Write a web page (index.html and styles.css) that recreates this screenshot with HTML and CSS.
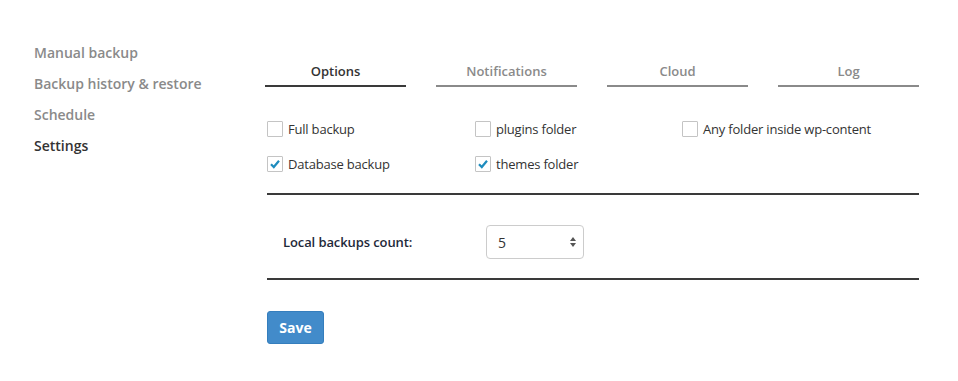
FILE: index.html
```html
<!DOCTYPE html>
<html lang="en">
<head>
    <meta charset="UTF-8">
    <title>Backup Settings</title>
    <link rel="stylesheet" href="styles.css">
</head>
<body>
    <div class="page">
        <ul class="side-menu">
            <li>Manual backup</li>
            <li>Backup history &amp; restore</li>
            <li>Schedule</li>
            <li class="active">Settings</li>
        </ul>

        <div class="main">
            <div class="tabs">
                <div class="tab active">Options</div>
                <div class="tab">Notifications</div>
                <div class="tab">Cloud</div>
                <div class="tab">Log</div>
            </div>

            <div class="panel">
                <div class="check-grid">
                    <label class="check"><span class="box"></span>Full backup</label>
                    <label class="check"><span class="box"></span>plugins folder</label>
                    <label class="check"><span class="box"></span>Any folder inside wp-content</label>
                    <label class="check"><span class="box"><svg viewBox="0 0 14 14" width="14" height="14"><path d="M3 7.2 L5.8 10 L11 3.8" fill="none" stroke="#1e8cbe" stroke-width="2.2"/></svg></span>Database backup</label>
                    <label class="check"><span class="box"><svg viewBox="0 0 14 14" width="14" height="14"><path d="M3 7.2 L5.8 10 L11 3.8" fill="none" stroke="#1e8cbe" stroke-width="2.2"/></svg></span>themes folder</label>
                </div>

                <div class="count-row">
                    <span class="count-label">Local backups count:</span>
                    <div class="select">
                        <span>5</span>
                        <svg viewBox="0 0 8 12" width="8" height="12"><path d="M4 1 L7 5 L1 5 Z M4 11 L7 7 L1 7 Z" fill="#555"/></svg>
                    </div>
                </div>

                <button class="save-button">Save</button>
            </div>
        </div>
    </div>
</body>
</html>
```

FILE: styles.css
```css
body {
    margin: 0;
    font-family: "Open Sans", Arial, sans-serif;
    background-color: #fff;
    color: #333;
}
.page {
    display: flex;
    align-items: flex-start;
    padding-left: 34px;
}
.side-menu {
    list-style: none;
    margin: 0;
    padding: 0;
    padding-top: 37px;
    width: 231px;
}
.side-menu li {
    font-size: 14px;
    font-weight: 600;
    line-height: 31px;
    color: #8a8a8a;
}
.side-menu li.active {
    color: #333;
}
.main {
    width: 654px;
    padding-top: 61px;
}
.tabs {
    display: flex;
    gap: 30px;
}
.tab {
    flex: 1;
    text-align: center;
    font-size: 13px;
    font-weight: 600;
    line-height: 20px;
    padding-bottom: 4px;
    color: #8a8a8a;
    border-bottom: 2px solid #8a8a8a;
}
.tab.active {
    color: #333;
    border-bottom-color: #3a3a3a;
}
.panel {
    margin-left: 2px;
}
.check-grid {
    display: grid;
    grid-template-columns: 208px 207px 1fr;
    row-gap: 15px;
    padding: 32px 0 19px;
    border-bottom: 2px solid #3a3a3a;
}
.check {
    display: flex;
    align-items: center;
    font-size: 13px;
    line-height: 20px;
    letter-spacing: -0.2px;
    color: #333;
}
.box {
    width: 14px;
    height: 14px;
    border: 1px solid #c4c4c4;
    border-radius: 1px;
    margin-right: 5px;
    display: flex;
    align-items: center;
    justify-content: center;
    box-sizing: content-box;
}
.box svg {
    display: block;
}
.count-row {
    display: flex;
    align-items: center;
    padding: 30px 0 19px 16px;
    border-bottom: 2px solid #3a3a3a;
}
.count-label {
    width: 203px;
    font-size: 13px;
    font-weight: 600;
    letter-spacing: -0.1px;
    color: #1f2a3a;
}
.select {
    width: 98px;
    height: 34px;
    box-sizing: border-box;
    border: 1px solid #ccc;
    border-radius: 4px;
    display: flex;
    align-items: center;
    justify-content: space-between;
    padding: 0 6px 0 11px;
    font-size: 14px;
    color: #333;
}
.select svg {
    display: block;
}
.save-button {
    margin-top: 31px;
    width: 57px;
    height: 33px;
    background-color: #428bca;
    border: 1px solid #357ebd;
    border-radius: 3px;
    color: #fff;
    font-family: "Open Sans", Arial, sans-serif;
    font-size: 14px;
    font-weight: 700;
    padding: 0;
    cursor: pointer;
}
```
